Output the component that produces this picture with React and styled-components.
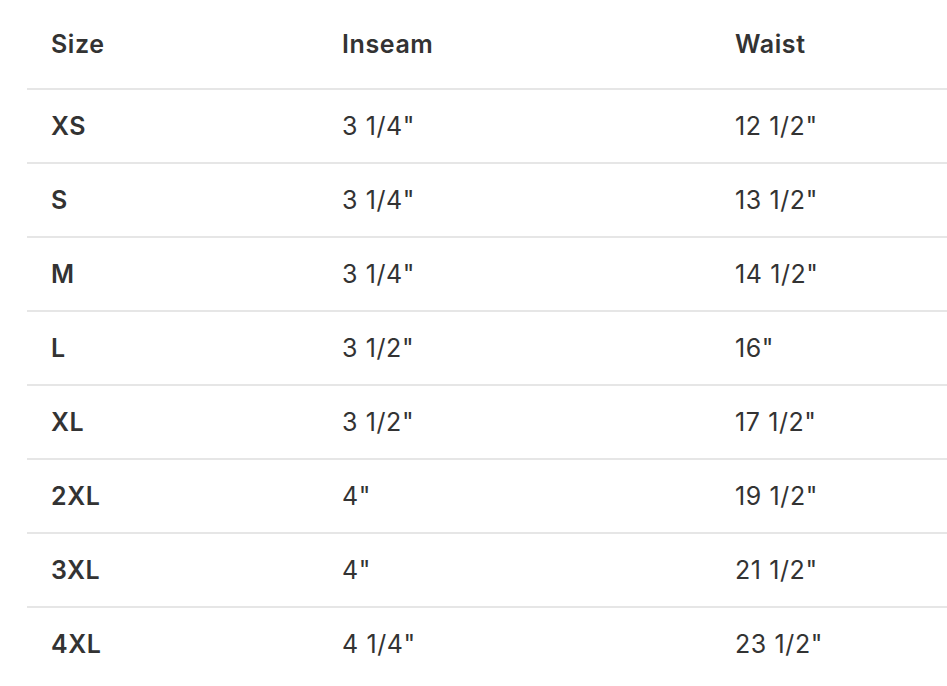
import styled, { createGlobalStyle } from 'styled-components';

const GlobalStyle = createGlobalStyle`
  html, body {
    margin: 0;
    padding: 0;
    background: #ffffff;
    overflow: hidden;
  }
  body {
    font-family: Inter, "Liberation Sans", Arial, sans-serif;
    color: #333333;
    -webkit-font-smoothing: antialiased;
  }
`;

const Wrapper = styled.div`
  padding-left: 27px;
  width: 920px;
`;

const Row = styled.div`
  display: grid;
  grid-template-columns: 291px 393px 1fr;
  align-items: center;
  height: ${props => (props.$head ? '88px' : '72px')};
  border-bottom: 2px solid ${props => (props.$last ? 'transparent' : '#e6e6e6')};
`;

const Cell = styled.div`
  padding-left: 24px;
  font-size: 25px;
  line-height: 1;
  font-weight: ${props => (props.$bold ? 600 : 400)};
  color: #333333;
  letter-spacing: 0.6px;
`;

const sizes = [
  ['XS', '3 1/4"', '12 1/2"'],
  ['S', '3 1/4"', '13 1/2"'],
  ['M', '3 1/4"', '14 1/2"'],
  ['L', '3 1/2"', '16"'],
  ['XL', '3 1/2"', '17 1/2"'],
  ['2XL', '4"', '19 1/2"'],
  ['3XL', '4"', '21 1/2"'],
  ['4XL', '4 1/4"', '23 1/2"'],
];

const App = () => {
  return (
    <>
      <GlobalStyle />
      <Wrapper>
        <Row $head>
          <Cell $bold>Size</Cell>
          <Cell $bold>Inseam</Cell>
          <Cell $bold>Waist</Cell>
        </Row>
        {sizes.map((item, index) => (
          <Row key={item[0]} $last={index === sizes.length - 1}>
            <Cell $bold>{item[0]}</Cell>
            <Cell>{item[1]}</Cell>
            <Cell>{item[2]}</Cell>
          </Row>
        ))}
      </Wrapper>
    </>
  );
};

export default App;
